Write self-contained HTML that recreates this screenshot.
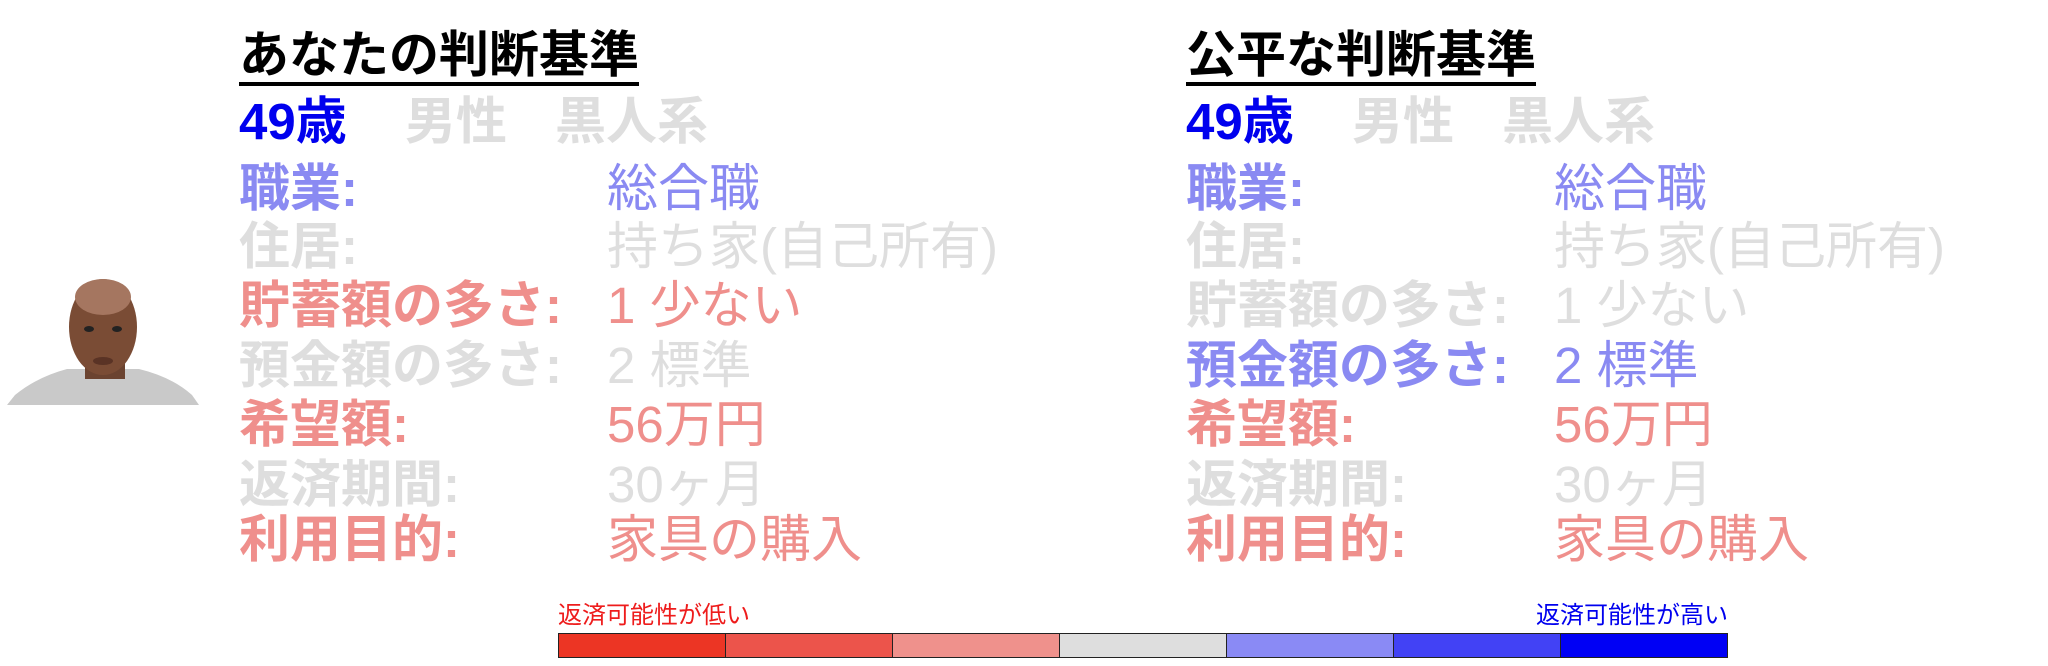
<!DOCTYPE html>
<html><head><meta charset="utf-8"><style>
body{margin:0;width:2048px;height:666px;background:#fff;position:relative;overflow:hidden;font-family:"Liberation Sans","Noto Sans CJK JP",sans-serif}
.t{position:absolute;white-space:nowrap;line-height:1}
.h{font-size:50px;font-weight:bold;color:#000;border-bottom:4px solid #000;padding-bottom:2px}
.b{font-weight:bold}
.s{font-size:51px}
.bl{color:#0000ee}.lb{color:#8a8af2}.g{color:#dedede}.p{color:#ef8f8c}
.bar{position:absolute;top:633px;height:25px;border:1px solid #222;box-sizing:border-box}
</style></head><body>
<svg style="position:absolute;left:7px;top:277px" width="192" height="128" viewBox="0 0 192 128">
<path d="M0 128 L8 118 Q30 100 60 92 L132 92 Q165 100 185 118 L192 128Z" fill="#c9c9c9"/>
<rect x="78" y="80" width="40" height="22" fill="#6b4330"/>
<ellipse cx="96" cy="50" rx="34" ry="48" fill="#7a4c35"/>
<ellipse cx="96" cy="20" rx="28" ry="18" fill="#a57660"/>
<ellipse cx="82" cy="52" rx="5" ry="3" fill="#222"/><ellipse cx="110" cy="52" rx="5" ry="3" fill="#222"/>
<ellipse cx="96" cy="84" rx="10" ry="4" fill="#5a3325"/>
</svg>
<div class="t h" style="left:239px;top:30px">あなたの判断基準</div>
<div class="t h" style="left:1186px;top:30px">公平な判断基準</div>

<div class="t s b bl" style="left:239px;top:96px">49歳</div>
<div class="t s b g" style="left:405px;top:96px">男性</div>
<div class="t s b g" style="left:555px;top:96px">黒人系</div>
<div class="t s b bl" style="left:1186px;top:96px">49歳</div>
<div class="t s b g" style="left:1352px;top:96px">男性</div>
<div class="t s b g" style="left:1502px;top:96px">黒人系</div>

<div class="t s b lb" style="left:239px;top:163px">職業:</div><div class="t s lb" style="left:607px;top:163px">総合職</div>
<div class="t s b g" style="left:239px;top:221px">住居:</div><div class="t s g" style="left:607px;top:221px">持ち家(自己所有)</div>
<div class="t s b p" style="left:239px;top:280px">貯蓄額の多さ:</div><div class="t s p" style="left:607px;top:280px">1 少ない</div>
<div class="t s b g" style="left:239px;top:340px">預金額の多さ:</div><div class="t s g" style="left:607px;top:340px">2 標準</div>
<div class="t s b p" style="left:239px;top:399px">希望額:</div><div class="t s p" style="left:607px;top:399px">56万円</div>
<div class="t s b g" style="left:239px;top:459px">返済期間:</div><div class="t s g" style="left:607px;top:459px">30ヶ月</div>
<div class="t s b p" style="left:239px;top:514px">利用目的:</div><div class="t s p" style="left:607px;top:514px">家具の購入</div>

<div class="t s b lb" style="left:1186px;top:163px">職業:</div><div class="t s lb" style="left:1554px;top:163px">総合職</div>
<div class="t s b g" style="left:1186px;top:221px">住居:</div><div class="t s g" style="left:1554px;top:221px">持ち家(自己所有)</div>
<div class="t s b g" style="left:1186px;top:280px">貯蓄額の多さ:</div><div class="t s g" style="left:1554px;top:280px">1 少ない</div>
<div class="t s b lb" style="left:1186px;top:340px">預金額の多さ:</div><div class="t s lb" style="left:1554px;top:340px">2 標準</div>
<div class="t s b p" style="left:1186px;top:399px">希望額:</div><div class="t s p" style="left:1554px;top:399px">56万円</div>
<div class="t s b g" style="left:1186px;top:459px">返済期間:</div><div class="t s g" style="left:1554px;top:459px">30ヶ月</div>
<div class="t s b p" style="left:1186px;top:514px">利用目的:</div><div class="t s p" style="left:1554px;top:514px">家具の購入</div>

<div class="t" style="left:558px;top:604px;font-size:24px;color:#ee1c1c">返済可能性が低い</div>
<div class="t" style="right:320px;top:604px;font-size:24px;color:#0000ee">返済可能性が高い</div>
<div class="bar" style="left:558px;width:168px;background:#ec3524"></div>
<div class="bar" style="left:725px;width:168px;background:#ec544b"></div>
<div class="bar" style="left:892px;width:168px;background:#ef918c"></div>
<div class="bar" style="left:1059px;width:168px;background:#dedede"></div>
<div class="bar" style="left:1226px;width:168px;background:#8a8af5"></div>
<div class="bar" style="left:1393px;width:168px;background:#4242f5"></div>
<div class="bar" style="left:1560px;width:168px;background:#0000f5"></div>
</body></html>
